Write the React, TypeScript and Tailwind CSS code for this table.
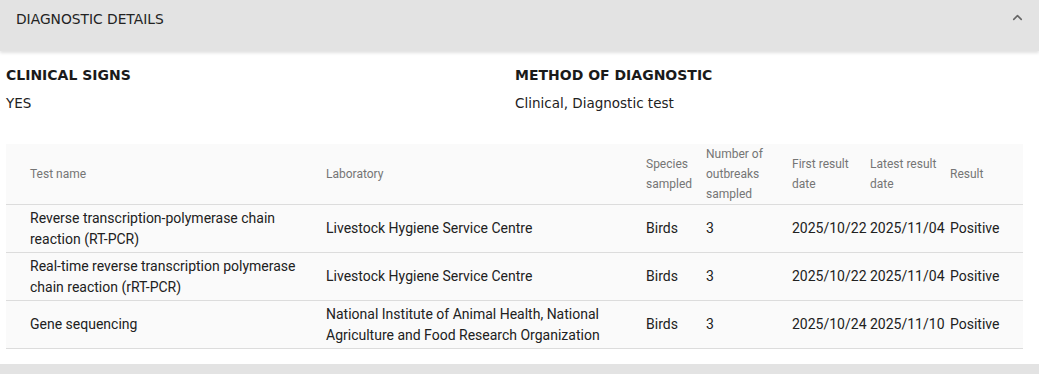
import React from "react";
import { ChevronUp } from "lucide-react";

const rows = [
  {
    test: "Reverse transcription-polymerase chain reaction (RT-PCR)",
    lab: "Livestock Hygiene Service Centre",
    species: "Birds",
    outbreaks: "3",
    first: "2025/10/22",
    latest: "2025/11/04",
    result: "Positive",
  },
  {
    test: "Real-time reverse transcription polymerase chain reaction (rRT-PCR)",
    lab: "Livestock Hygiene Service Centre",
    species: "Birds",
    outbreaks: "3",
    first: "2025/10/22",
    latest: "2025/11/04",
    result: "Positive",
  },
  {
    test: "Gene sequencing",
    lab: "National Institute of Animal Health, National Agriculture and Food Research Organization",
    species: "Birds",
    outbreaks: "3",
    first: "2025/10/24",
    latest: "2025/11/10",
    result: "Positive",
  },
];

const head = "font-['DejaVu_Sans',sans-serif]";
const roboto = "font-['Roboto',sans-serif]";

export default function App() {
  return (
    <div className="w-[1039px] h-[374px] bg-white overflow-hidden flex flex-col">
      <div className={`h-[51px] bg-[#e3e3e3] shadow-[0_2px_3px_rgba(0,0,0,0.12)] flex items-start justify-between pl-4 pr-[14px] pt-[9px] relative z-10 ${head}`}>
        <span className="text-[13.8px] leading-[20px] text-[#222]">DIAGNOSTIC DETAILS</span>
        <ChevronUp size={15} strokeWidth={2.5} className="text-[#666] mt-[1px]" />
      </div>

      <div className={`grid grid-cols-[509px_1fr] px-[6px] pt-[15px] ${head}`}>
        <div>
          <div className="text-[14px] leading-[18px] font-bold text-[#1a1a1a]">CLINICAL SIGNS</div>
          <div className="text-[13.5px] leading-[18px] text-[#222] mt-[10px]">YES</div>
        </div>
        <div>
          <div className="text-[14px] leading-[18px] font-bold text-[#1a1a1a]">METHOD OF DIAGNOSTIC</div>
          <div className="text-[13.5px] leading-[18px] text-[#222] mt-[10px]">Clinical, Diagnostic test</div>
        </div>
      </div>

      <div className="px-[6px] pr-[16px] mt-[32px]">
        <table className={`w-full bg-[#fafafa] border-collapse table-fixed ${roboto}`}>
          <colgroup>
            <col className="w-[320px]" />
            <col className="w-[320px]" />
            <col className="w-[60px]" />
            <col className="w-[86px]" />
            <col className="w-[78px]" />
            <col className="w-[80px]" />
            <col />
          </colgroup>
          <thead>
            <tr className="h-[60px] border-b border-[#dcdcdc] text-left text-[12px] leading-[20px] text-[#757575]">
              <th className="font-normal pl-6">Test name</th>
              <th className="font-normal">Laboratory</th>
              <th className="font-normal">Species sampled</th>
              <th className="font-normal">Number of outbreaks sampled</th>
              <th className="font-normal">First result date</th>
              <th className="font-normal">Latest result date</th>
              <th className="font-normal">Result</th>
            </tr>
          </thead>
          <tbody className="text-[14px] leading-[21px] text-[#212121]">
            {rows.map((r) => (
              <tr key={r.test} className="h-[48px] border-b border-[#dcdcdc]">
                <td className="pl-6 pr-4">{r.test}</td>
                <td className="pr-4">{r.lab}</td>
                <td>{r.species}</td>
                <td>{r.outbreaks}</td>
                <td>{r.first}</td>
                <td>{r.latest}</td>
                <td>{r.result}</td>
              </tr>
            ))}
          </tbody>
        </table>
      </div>

      <div className="mt-auto h-[10px] bg-[#e3e3e3]" />
    </div>
  );
}
